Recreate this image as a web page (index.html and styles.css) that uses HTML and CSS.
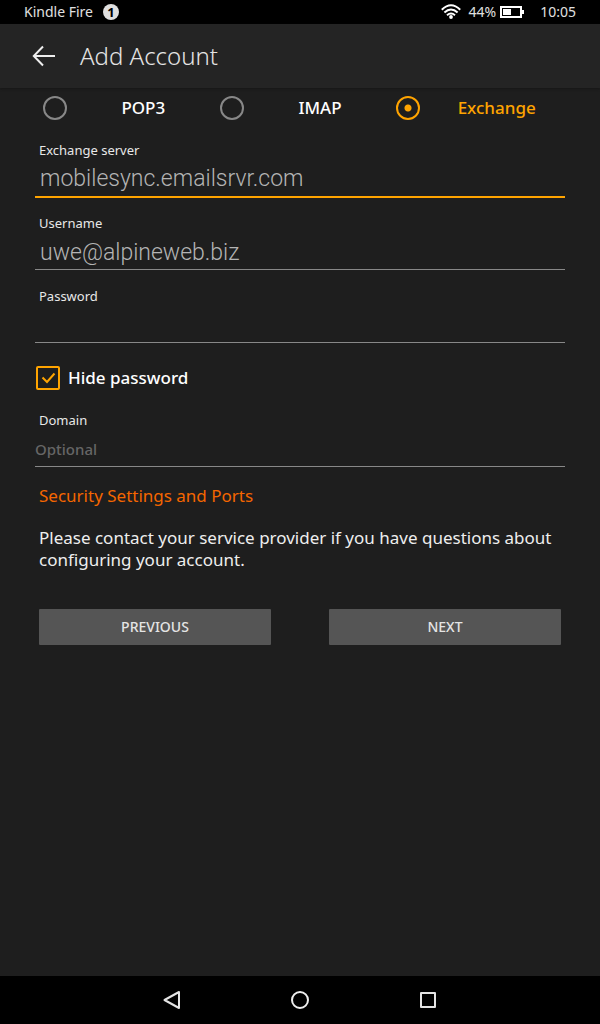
FILE: index.html
```html
<!DOCTYPE html>
<html lang="en">
<head>
<meta charset="utf-8">
<meta name="viewport" content="width=device-width, initial-scale=1">
<title>Add Account</title>
<link rel="stylesheet" href="styles.css">
</head>
<body>
<div class="status">
  <span>Kindle Fire</span>
  <span class="count">1</span>
  <svg class="wifi" width="20" height="16" viewBox="0 0 20 16" fill="none" stroke="#fff" stroke-width="2"><path d="M.8 5.800Q10-3.200 19.200 5.800M3.400 8.600Q10 2.400 16.600 8.600M6 11.200Q10 7.800 14 11.200"/><circle cx="10" cy="13" r="1.900" fill="#fff" stroke="none"/></svg>
  <span class="percent">44%</span>
  <svg class="battery" width="24" height="12" viewBox="0 0 24 12"><path d="M1 1h20v10H1z" fill="none" stroke="#fff" stroke-width="2"/><path d="M3 3h8v6H3zM22 4h2v4h-2z" fill="#fff"/></svg>
  <span class="clock">10:05</span>
</div>
<header class="bar">
  <button class="back" type="button" aria-label="Back"><svg width="24" height="22" viewBox="0 0 24 22" fill="none" stroke="#eee" stroke-width="2"><path d="M23 11H2M11 1.500L1.800 11 11 20.500"/></svg></button>
  <h1 class="title">Add Account</h1>
</header>
<main class="content">
  <form class="form">
    <div class="types" role="radiogroup" aria-label="Account type">
      <label class="type"><input class="radio" type="radio" name="type"><span class="type-name">POP3</span></label>
      <label class="type"><input class="radio" type="radio" name="type"><span class="type-name">IMAP</span></label>
      <label class="type"><input class="radio" type="radio" name="type" checked><span class="type-name">Exchange</span></label>
    </div>
    <div class="field">
      <label class="label" for="server">Exchange server</label>
      <input class="input input-active" id="server" type="text" value="mobilesync.emailsrvr.com">
    </div>
    <div class="field">
      <label class="label" for="user">Username</label>
      <input class="input" id="user" type="text" value="uwe@alpineweb.biz">
    </div>
    <div class="field">
      <label class="label" for="password">Password</label>
      <input class="input" id="password" type="password">
    </div>
    <label class="hide">
      <input class="check" type="checkbox" checked>
      <svg class="tick" width="24" height="24" viewBox="0 0 24 24" fill="none" stroke="#ffa400" stroke-width="2"><path d="M6.500 11.500L11 16l7.500-8.500"/></svg>
      <span>Hide password</span>
    </label>
    <div class="field">
      <label class="label" for="domain">Domain</label>
      <input class="input input-optional" id="domain" type="text" placeholder="Optional">
    </div>
    <a class="security" href="#">Security Settings and Ports</a>
    <p class="note">Please contact your service provider if you have questions about configuring your account.</p>
    <div class="actions">
      <button class="button" type="button">PREVIOUS</button>
      <button class="button" type="button">NEXT</button>
    </div>
  </form>
</main>
<nav class="nav">
  <button class="key" type="button" aria-label="Back"><svg width="20" height="20" viewBox="0 0 20 20" fill="none" stroke="#e4e4e4" stroke-width="2" stroke-linejoin="round"><path d="M17 2v16L2.500 10z"/></svg></button>
  <button class="key" type="button" aria-label="Home"><svg width="20" height="20" viewBox="0 0 20 20" fill="none" stroke="#eee" stroke-width="2"><circle cx="10" cy="10" r="8"/></svg></button>
  <button class="key" type="button" aria-label="Recent apps"><svg width="20" height="20" viewBox="0 0 20 20" fill="none" stroke="#e4e4e4" stroke-width="2" stroke-linejoin="round"><path d="M3 3h14v14H3z"/></svg></button>
</nav>
</body>
</html>
```
FILE: styles.css
```css
* { box-sizing: border-box; }
body {
  margin: 0;
  min-height: 100vh;
  display: flex;
  flex-direction: column;
  background: #1e1e1e;
  color: #fff;
  font-family: "Noto Sans", "Open Sans", sans-serif;
}
button { font-family: inherit; border: 0; padding: 0; background: none; color: inherit; }
svg { display: block; }

.status {
  height: 24px;
  padding: 0 24px;
  display: flex;
  align-items: center;
  background: #000;
  color: #e0e0e0;
  font-size: 14px;
  line-height: 24px;
}
.count {
  width: 16px;
  height: 16px;
  margin-left: 10px;
  border-radius: 50%;
  background: #e0e0e0;
  color: #000;
  font-size: 13px;
  font-weight: 700;
  line-height: 16px;
  text-align: center;
}
.wifi { margin-left: auto; }
.percent { margin-left: 8px; }
.battery { margin-left: 4px; }
.clock { margin-left: 16px; }

.bar {
  height: 64px;
  padding: 0 32px;
  display: flex;
  align-items: center;
  gap: 24px;
  background: #242424;
  box-shadow: 0 1px 2px #161616;
}
.title { margin: 0; padding-bottom: 2px; font-size: 24px; font-weight: 300; color: #e4e4e4; }

.content { flex: 1; padding: 0 35px; }
.form { display: flex; flex-direction: column; }
.types { display: grid; grid-template-columns: repeat(3, 1fr); height: 40px; margin-bottom: 12px; }
.type { display: flex; align-items: center; font-size: 17px; font-weight: 500; }
.type-name { flex: 1; padding-bottom: 2px; text-align: center; }
.radio {
  appearance: none;
  width: 24px;
  height: 24px;
  margin: 0 8px;
  border: 2px solid #888;
  border-radius: 50%;
}
.radio:checked {
  border-color: #ffa400;
  background: radial-gradient(circle, #ffa400 3px, transparent 4px);
}
.radio:checked + .type-name { color: #ffa400; }

.field { display: flex; flex-direction: column; min-height: 58px; margin-bottom: 15px; }
.label { padding-left: 4px; font-size: 13px; line-height: 20px; color: #e8e8e8; }
.input {
  width: 100%;
  height: 37px;
  padding: 2px 5px 0;
  border: 0;
  border-bottom: 1px solid #888;
  border-radius: 0;
  outline: 0;
  background: none;
  color: #b4b4b4;
  font-family: Roboto, sans-serif;
  font-size: 23px;
  font-weight: 300;
}
.input-active { height: 38px; padding-top: 0; border-bottom: 2px solid #ffa400; }
.input-optional { padding: 2px 0 0; font-family: "Noto Sans", sans-serif; font-size: 15px; font-weight: 500; }
.input-optional::placeholder { color: #666; opacity: 1; }

.hide {
  display: grid;
  grid-template-columns: 24px 1fr;
  column-gap: 8px;
  align-items: center;
  height: 24px;
  margin: 7px 0 20px;
  padding-left: 1px;
  font-size: 17px;
  font-weight: 500;
  line-height: 24px;
}
.check {
  appearance: none;
  grid-area: 1 / 1;
  width: 24px;
  height: 24px;
  margin: 0;
  border: 2px solid #ffa400;
  border-radius: 2px;
}
.tick { grid-area: 1 / 1; visibility: hidden; }
.check:checked + .tick { visibility: visible; }

.security {
  margin-left: 4px;
  align-self: flex-start;
  color: #f56600;
  font-size: 17px;
  font-weight: 400;
  line-height: 26px;
  text-decoration: none;
}
.note { margin: 18px 4px 38px; color: #eee; font-size: 17px; font-weight: 400; line-height: 22px; }
.actions { display: grid; grid-template-columns: 1fr 1fr; gap: 58px; padding: 0 4px; }
.button {
  height: 36px;
  padding-bottom: 2px;
  border-radius: 1px;
  background: #555;
  color: #e4e4e4;
  font-size: 14px;
  font-weight: 500;
}

.nav { height: 48px; display: flex; justify-content: center; background: #000; }
.key { width: 128px; display: grid; place-items: center; }
```
